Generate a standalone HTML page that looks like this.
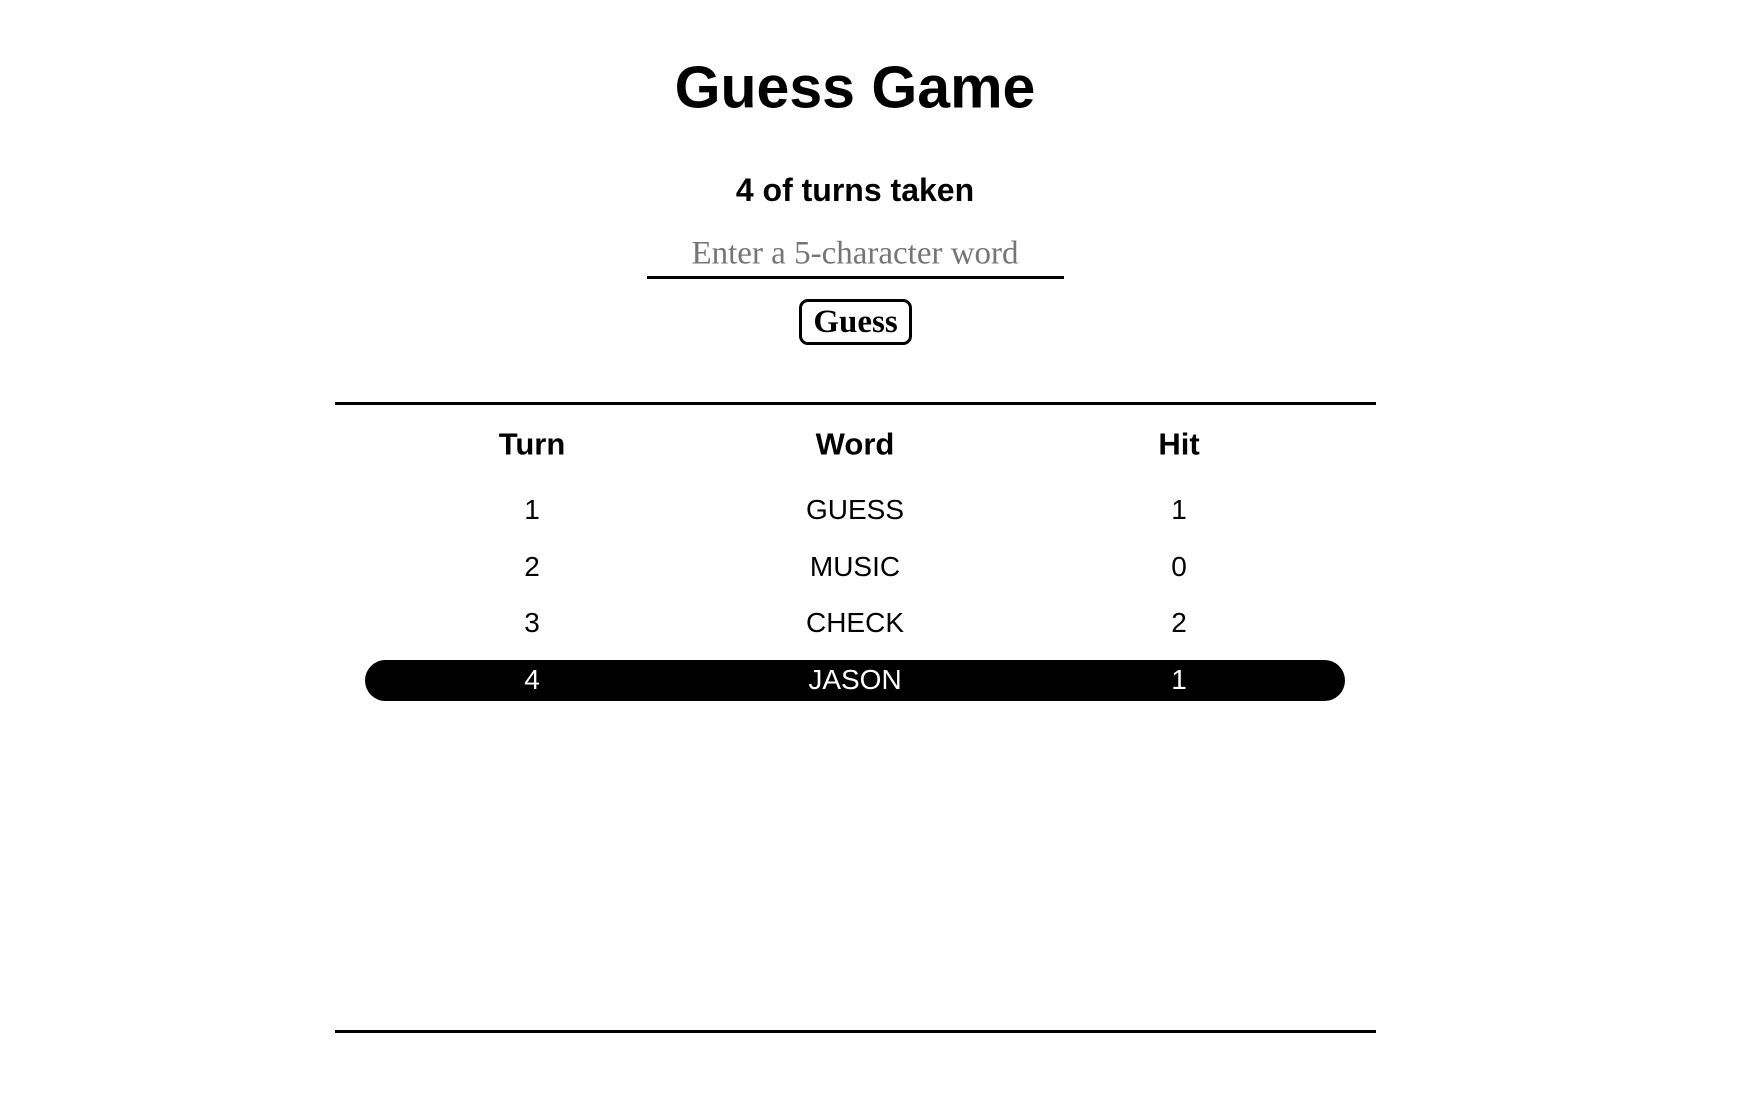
<!DOCTYPE html>
<html><head><meta charset="utf-8"><style>
html,body{margin:0;padding:0;background:#fff;width:1741px;height:1099px;overflow:hidden;position:relative;font-family:"Liberation Sans",sans-serif;color:#000}
.a{position:absolute;white-space:nowrap;transform:translate(-50%,-50%);line-height:1}
.line{position:absolute;background:#000;height:3px}
.pill{position:absolute;left:365px;top:660px;width:980px;height:41px;background:#000;border-radius:21px}
.btn{position:absolute;left:799px;top:299px;width:107px;height:40px;border:3px solid #000;border-radius:9px;display:flex;align-items:center;justify-content:center;font:bold 33px "Liberation Serif",serif}
.h{font-weight:bold;font-size:31px}
.r{font-size:28px}
</style></head><body>
<div class="a" style="left:855px;top:88px;font-weight:bold;font-size:59px">Guess Game</div>
<div class="a" style="left:855px;top:190px;font-weight:bold;font-size:32px">4 of turns taken</div>
<div class="a" style="left:855px;top:254px;font:33px 'Liberation Serif',serif;color:#757575">Enter a 5-character word</div>
<div class="line" style="left:647px;top:276px;width:417px"></div>
<div class="btn">Guess</div>
<div class="line" style="left:335px;top:402px;width:1041px"></div>
<div class="line" style="left:335px;top:1030px;width:1041px"></div>
<div class="a h" style="left:532px;top:444px">Turn</div>
<div class="a h" style="left:855px;top:444px">Word</div>
<div class="a h" style="left:1179px;top:444px">Hit</div>
<div class="a r" style="left:532px;top:510px">1</div>
<div class="a r" style="left:855px;top:510px">GUESS</div>
<div class="a r" style="left:1179px;top:510px">1</div>
<div class="a r" style="left:532px;top:567px">2</div>
<div class="a r" style="left:855px;top:567px">MUSIC</div>
<div class="a r" style="left:1179px;top:567px">0</div>
<div class="a r" style="left:532px;top:623px">3</div>
<div class="a r" style="left:855px;top:623px">CHECK</div>
<div class="a r" style="left:1179px;top:623px">2</div>
<div class="pill"></div>
<div class="a r" style="left:532px;top:680px;color:#fff">4</div>
<div class="a r" style="left:855px;top:680px;color:#fff">JASON</div>
<div class="a r" style="left:1179px;top:680px;color:#fff">1</div>
</body></html>
